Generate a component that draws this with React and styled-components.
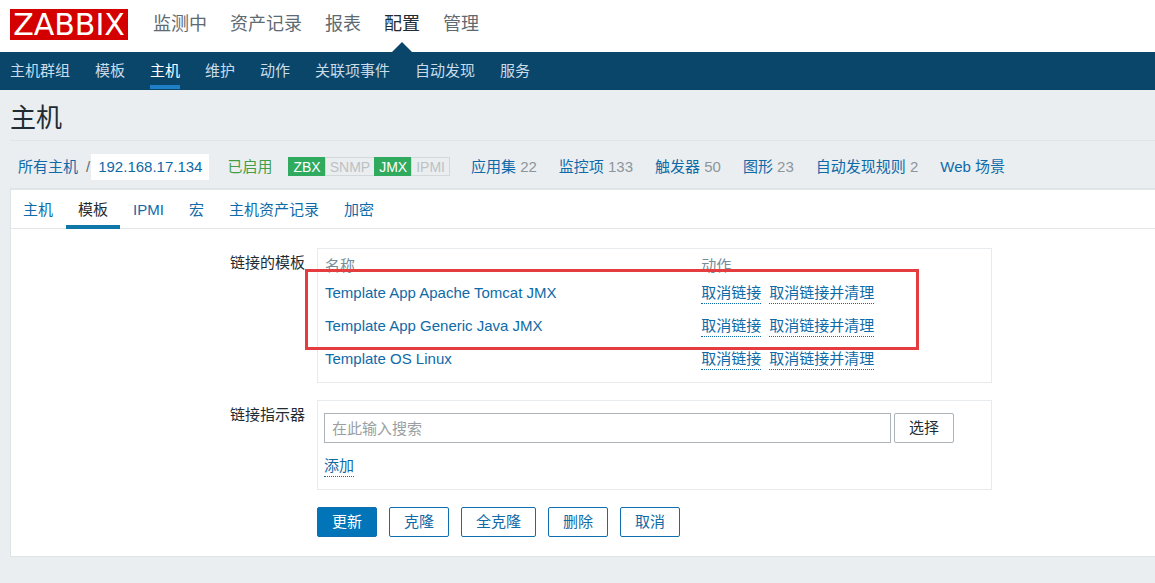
import React, { useState } from 'react';
import styled, { createGlobalStyle } from 'styled-components';

const GlobalStyle = createGlobalStyle`
* {
  box-sizing: border-box;
}
body {
  margin: 0;
  background-color: #ebeef0;
  color: #1f2c33;
  font-family: "Liberation Sans", "Noto Sans CJK SC", sans-serif;
  font-size: 15px;
  line-height: 20px;
}
a {
  color: #0f6aa8;
  text-decoration: none;
}
button, input {
  font-family: inherit;
  font-size: 15px;
  line-height: 20px;
}
`;

const Header = styled.header`
display: flex;
align-items: center;
height: 52px;
padding: 0 10px;
background-color: #fff;
`;

const Logo = styled.a`
display: flex;
align-items: center;
justify-content: center;
width: 118px;
height: 31px;
margin-bottom: 3px;
background-color: #d40000;
color: #fff;
font-family: "DejaVu Sans", sans-serif;
font-size: 30px;
line-height: 31px;
`;

const MainNav = styled.nav`
display: flex;
align-self: stretch;
gap: 23px;
margin-left: 25px;
`;

const MainLink = styled.a`
position: relative;
display: flex;
align-items: center;
padding-bottom: 4px;
color: ${(props) => (props.$active ? '#1f2c33' : '#5e6a71')};
font-size: 18px;

&::after {
  content: '';
  display: ${(props) => (props.$active ? 'block' : 'none')};
  position: absolute;
  bottom: 0;
  left: 50%;
  margin-left: -10px;
  border: solid transparent;
  border-width: 0 10px 10px;
  border-bottom-color: #0a466a;
}
`;

const SubNav = styled.nav`
display: flex;
gap: 25px;
height: 38px;
padding: 0 10px;
background-color: #0a466a;
`;

const SubLink = styled.a`
display: flex;
align-items: center;
height: 37px;
padding-top: 4px;
border-bottom: 4px solid ${(props) => (props.$active ? '#1f80c8' : 'transparent')};
color: ${(props) => (props.$active ? '#fff' : '#c8dcea')};
`;

const Title = styled.h1`
margin: 0 0 0 10px;
padding: 12px 0 6px;
border-bottom: 1px solid #dfe4e7;
font-size: 26px;
font-weight: normal;
line-height: 32px;
`;

const HostBar = styled.div`
display: flex;
align-items: center;
height: 48px;
margin: 0 0 0 10px;
padding: 4px 8px 0;
border-bottom: 1px solid #dfe4e7;
white-space: nowrap;
`;

const Slash = styled.span`
padding: 0 1px 0 8px;
color: #5e6a71;
`;

const HostName = styled.a`
padding: 3px 7px;
background-color: #fff;
`;

const Status = styled.span`
margin-left: 18px;
color: #429e47;
`;

const Badges = styled.div`
display: flex;
margin: 0 21px 0 16px;
`;

const Badge = styled.span`
height: 19px;
padding: 0 4px;
border: 1px solid ${(props) => (props.$on ? '#2faa5f' : '#d3d8db')};
background-color: ${(props) => (props.$on ? '#2faa5f' : 'transparent')};
color: ${(props) => (props.$on ? '#fff' : '#bcc1c4')};
font-size: 14px;
line-height: 18px;

& + & {
  margin-left: -1px;
}
`;

const HostLinks = styled.div`
display: flex;
gap: 22px;
`;

const Count = styled.span`
color: #8b969c;
`;

const Panel = styled.main`
margin-left: 10px;
border: solid #dfe4e7;
border-width: 1px 0 1px 1px;
background-color: #fff;
`;

const Tabs = styled.div`
display: flex;
gap: 1px;
height: 39px;
border-bottom: 1px solid #e4e8ea;
`;

const Tab = styled.button`
height: 39px;
padding: 4px 12px 0;
border: none;
border-bottom: 4px solid ${(props) => (props.$active ? '#0f76a8' : 'transparent')};
background: none;
color: ${(props) => (props.$active ? '#1f2c33' : '#0f6aa8')};
cursor: pointer;
`;

const Form = styled.form`
display: grid;
grid-template-columns: 294px minmax(0, 675px);
column-gap: 12px;
row-gap: 17px;
padding: 19px 12px 19px 0;
`;

const Label = styled.label`
padding-top: 5px;
text-align: right;
`;

const Box = styled.div`
position: relative;
padding: ${(props) => props.$pad || '6px 6px 6px 7px'};
border: 1px solid #e8ebed;
`;

const TemplateTable = styled.table`
width: 100%;
table-layout: fixed;
border-collapse: collapse;

th {
  height: 22px;
  padding: 0;
  color: #768d99;
  font-weight: normal;
  text-align: left;
}
th:first-child {
  width: 57%;
}
td {
  height: 33px;
  padding: 6px 0 0;
  vertical-align: top;
}
`;

const TemplateLink = styled.a`
display: block;
`;

const Actions = styled.div`
display: flex;
gap: 8px;
`;

const LinkButton = styled.button`
padding: 0;
border: none;
border-bottom: 1px dotted #0f6aa8;
background: none;
color: #0f6aa8;
cursor: pointer;
`;

const Highlight = styled.div`
position: absolute;
top: 20px;
left: -13px;
width: 614px;
height: 81px;
border: 3px solid #e53d3f;
pointer-events: none;
`;

const SearchRow = styled.div`
display: flex;
gap: 3px;
margin-bottom: 13px;
`;

const Search = styled.input`
flex: 1;
min-width: 0;
height: 30px;
padding: 0 7px;
border: 1px solid #acb4b9;
border-radius: 0;

&::placeholder {
  color: #9a9fa2;
}
`;

const Button = styled.button`
height: 30px;
padding: 0 14px;
border: 1px solid ${(props) => (props.$plain ? '#acb4b9' : '#0f6fae')};
border-radius: 2px;
background-color: ${(props) => (props.$primary ? '#0275b8' : '#fff')};
color: ${(props) => (props.$primary ? '#fff' : props.$plain ? '#1f2c33' : '#0f6aa8')};
cursor: pointer;
`;

const Buttons = styled.div`
display: flex;
grid-column: 2;
gap: 12px;
`;

const mainMenu = ['监测中', '资产记录', '报表', '配置', '管理'];
const subMenu = ['主机群组', '模板', '主机', '维护', '动作', '关联项事件', '自动发现', '服务'];
const tabs = ['主机', '模板', 'IPMI', '宏', '主机资产记录', '加密'];
const interfaces = [
  { name: 'ZBX', on: true },
  { name: 'SNMP', on: false },
  { name: 'JMX', on: true },
  { name: 'IPMI', on: false },
];
const hostLinks = [
  { name: '应用集', count: 22 },
  { name: '监控项', count: 133 },
  { name: '触发器', count: 50 },
  { name: '图形', count: 23 },
  { name: '自动发现规则', count: 2 },
  { name: 'Web 场景' },
];
const templates = [
  'Template App Apache Tomcat JMX',
  'Template App Generic Java JMX',
  'Template OS Linux',
];

function LinkedTemplates() {
  return (
    <Box>
      <TemplateTable aria-labelledby="linked-label">
        <thead>
          <tr>
            <th>名称</th>
            <th>动作</th>
          </tr>
        </thead>
        <tbody>
          {templates.map((name) => (
            <tr key={name}>
              <td><TemplateLink href="#template">{name}</TemplateLink></td>
              <td>
                <Actions>
                  <LinkButton type="button">取消链接</LinkButton>
                  <LinkButton type="button">取消链接并清理</LinkButton>
                </Actions>
              </td>
            </tr>
          ))}
        </tbody>
      </TemplateTable>
      <Highlight />
    </Box>
  );
}

function App() {
  const [tab, setTab] = useState('模板');
  const [search, setSearch] = useState('');

  return (
    <>
      <GlobalStyle />
      <Header>
        <Logo href="#home">ZABBIX</Logo>
        <MainNav>
          {mainMenu.map((name) => (
            <MainLink key={name} href="#main" $active={name === '配置'}>{name}</MainLink>
          ))}
        </MainNav>
      </Header>
      <SubNav>
        {subMenu.map((name) => (
          <SubLink key={name} href="#sub" $active={name === '主机'}>{name}</SubLink>
        ))}
      </SubNav>
      <Title>主机</Title>
      <HostBar>
        <a href="#hosts">所有主机</a>
        <Slash>/</Slash>
        <HostName href="#host">192.168.17.134</HostName>
        <Status>已启用</Status>
        <Badges>
          {interfaces.map(({ name, on }) => (
            <Badge key={name} $on={on}>{name}</Badge>
          ))}
        </Badges>
        <HostLinks>
          {hostLinks.map(({ name, count }) => (
            <span key={name}>
              <a href="#list">{name}</a>
              {count && <Count>{` ${count}`}</Count>}
            </span>
          ))}
        </HostLinks>
      </HostBar>
      <Panel>
        <Tabs role="tablist">
          {tabs.map((name) => (
            <Tab
              key={name}
              type="button"
              role="tab"
              aria-selected={name === tab}
              $active={name === tab}
              onClick={() => setTab(name)}
            >
              {name}
            </Tab>
          ))}
        </Tabs>
        <Form onSubmit={(event) => event.preventDefault()}>
          <Label as="span" id="linked-label">链接的模板</Label>
          <LinkedTemplates />
          <Label htmlFor="template-search">链接指示器</Label>
          <Box $pad="12px 37px 12px 6px">
            <SearchRow>
              <Search
                id="template-search"
                type="text"
                placeholder="在此输入搜索"
                value={search}
                onChange={(event) => setSearch(event.target.value)}
              />
              <Button type="button" $plain>选择</Button>
            </SearchRow>
            <LinkButton type="button">添加</LinkButton>
          </Box>
          <Buttons>
            <Button type="submit" $primary>更新</Button>
            <Button type="button">克隆</Button>
            <Button type="button">全克隆</Button>
            <Button type="button">删除</Button>
            <Button type="button">取消</Button>
          </Buttons>
        </Form>
      </Panel>
    </>
  );
}

export default App;
